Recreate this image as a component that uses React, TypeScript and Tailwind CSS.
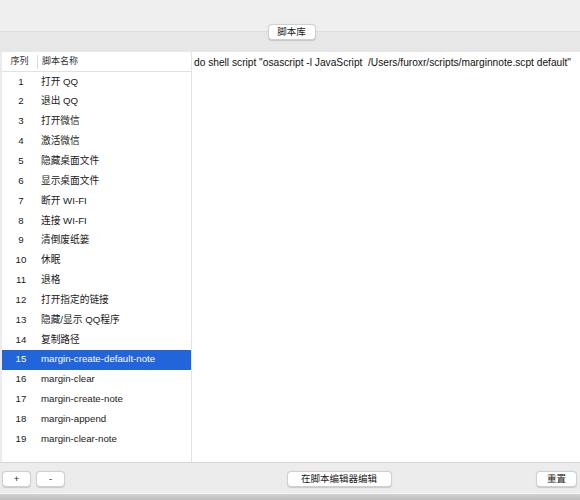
const scripts = [
  '打开 QQ',
  '退出 QQ',
  '打开微信',
  '激活微信',
  '隐藏桌面文件',
  '显示桌面文件',
  '断开 WI-FI',
  '连接 WI-FI',
  '清倒废纸篓',
  '休眠',
  '退格',
  '打开指定的链接',
  '隐藏/显示 QQ程序',
  '复制路径',
  'margin-create-default-note',
  'margin-clear',
  'margin-create-note',
  'margin-append',
  'margin-clear-note',
]

const selected = 14

function MacButton({ children, className = '' }: { children: React.ReactNode; className?: string }) {
  return (
    <button
      className={`h-[16px] shrink-0 flex items-center justify-center rounded-[4px] bg-white border border-[#d0d0d0] shadow-[0_0.5px_1px_rgba(0,0,0,0.15)] text-[9.5px] text-[#222] leading-none ${className}`}
    >
      {children}
    </button>
  )
}

export default function App() {
  return (
    <div className="w-[580px] h-[500px] flex flex-col bg-[#ececec] font-['Liberation_Sans','Noto_Sans_CJK_SC',sans-serif] overflow-hidden">
      {/* Tab strip */}
      <div className="h-[52px] shrink-0 flex justify-center pt-[24px] bg-[linear-gradient(#efefef_0_31px,#dcdcdc_31px_32px,#e7e7e7_32px)]">
        <MacButton className="w-[48px] ml-[3px]">脚本库</MacButton>
      </div>

      {/* Body */}
      <div className="h-[410px] shrink-0 flex pl-[2px]">
        {/* Script list */}
        <div className="w-[189px] shrink-0 bg-white flex flex-col">
          <div className="h-[20px] shrink-0 flex items-center border-b border-[#e2e2e2] text-[9px] text-[#333]">
            <span className="w-[35px] text-center">序列</span>
            <span className="w-px h-[14px] bg-[#dcdcdc]" />
            <span className="pl-[4px]">脚本名称</span>
          </div>
          {scripts.map((name, i) => (
            <div
              key={name}
              className={`h-[19.85px] shrink-0 flex items-center text-[9.7px] whitespace-nowrap ${
                i === selected ? 'bg-[#2264d9] text-white' : 'text-[#1a1a1a]'
              }`}
            >
              <span className="w-[38px] text-center">{i + 1}</span>
              <span className="pl-[1px]">{name}</span>
            </div>
          ))}
        </div>

        {/* Script source */}
        <div className="flex-1 min-w-0 bg-white border-l border-[#e4e4e4] pl-[2px] pt-[3px] text-[10.2px] text-[#111] whitespace-pre">
          do shell script "osascript -l JavaScript  /Users/furoxr/scripts/marginnote.scpt default"
        </div>
      </div>

      {/* Bottom toolbar */}
      <div className="h-[31px] shrink-0 flex items-center border-t border-[#d6d6d6] pl-[2px] pr-[3px] pt-[1px]">
        <MacButton className="w-[29px]">+</MacButton>
        <MacButton className="w-[29px] ml-[5px]">-</MacButton>
        <div className="flex-1 flex justify-center pl-[77px]">
          <MacButton className="w-[105px]">在脚本编辑器编辑</MacButton>
        </div>
        <MacButton className="w-[41px]">重置</MacButton>
      </div>

      {/* Window edge */}
      <div className="flex-1 border-t border-[#f6f6f6] bg-[linear-gradient(#d2d2d2,#bdbdbd)]" />
    </div>
  )
}
